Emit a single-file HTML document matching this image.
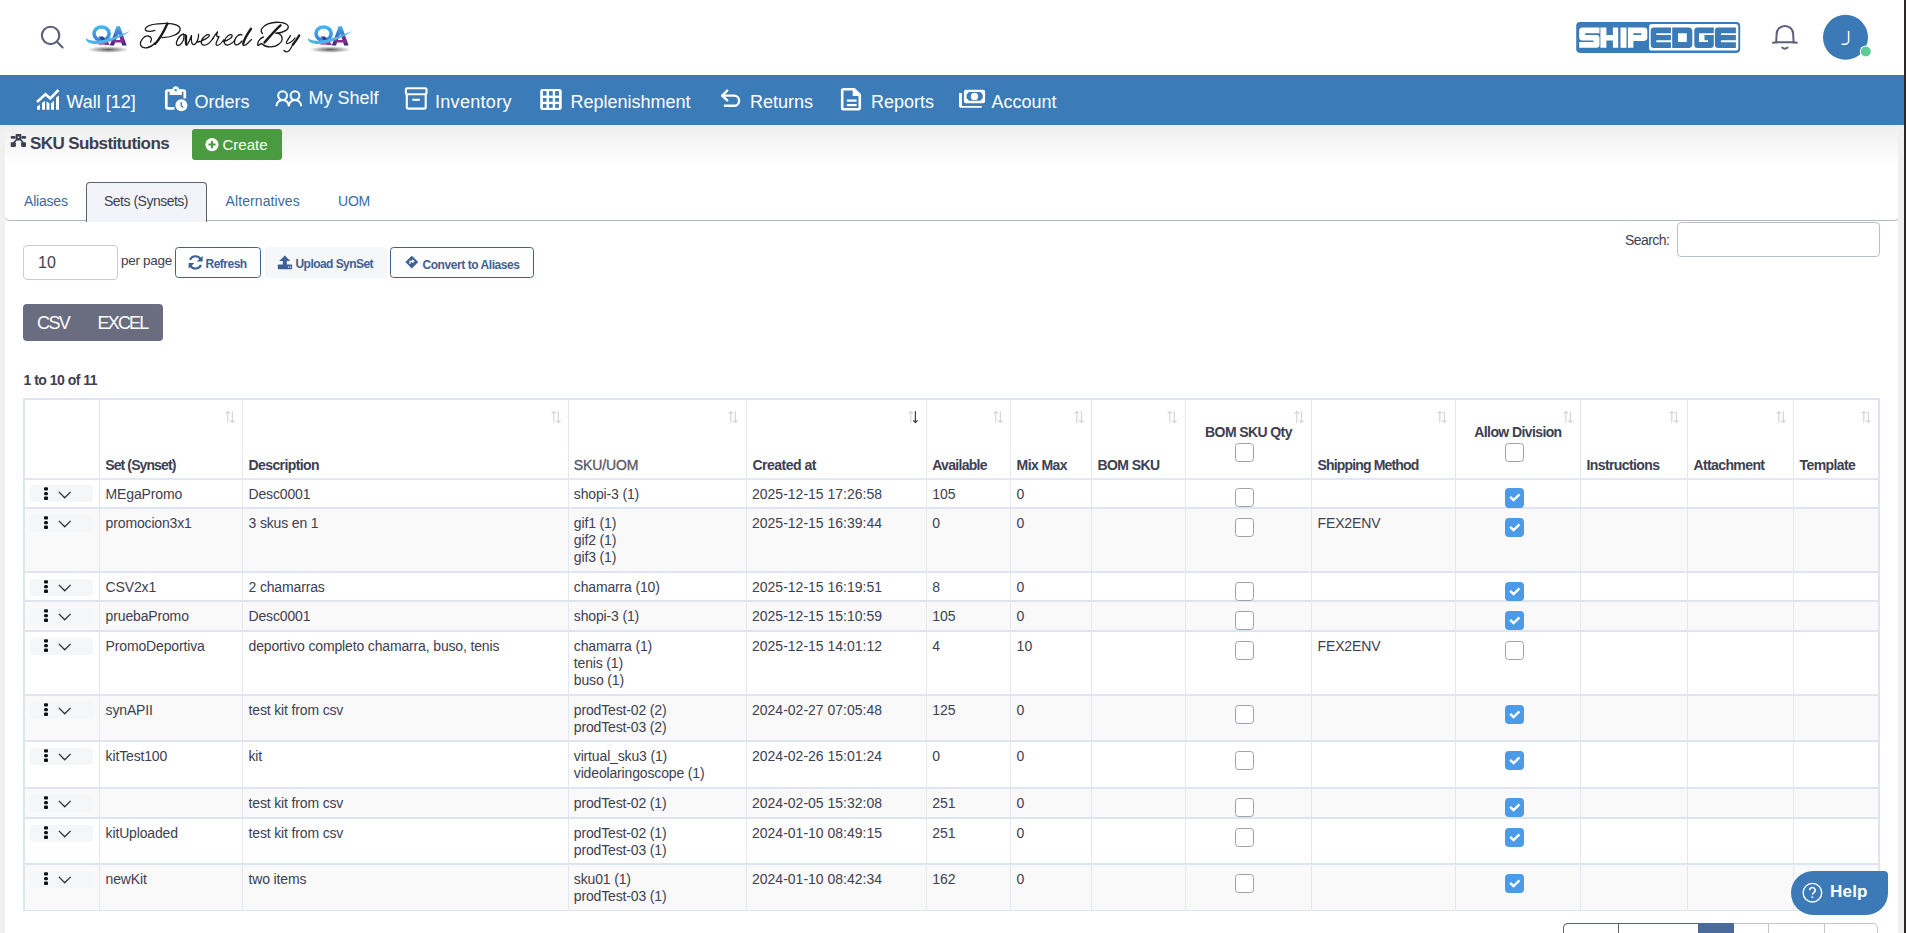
<!DOCTYPE html>
<html><head><meta charset="utf-8">
<style>
*{box-sizing:border-box;}
html,body{margin:0;padding:0;}
body{width:1906px;height:933px;overflow:hidden;position:relative;background:#f0f0f0;font-family:"Liberation Sans",sans-serif;color:#3d4051;}
.a{position:absolute;white-space:nowrap;}
#hdr{position:absolute;left:0;top:0;width:1904px;height:75px;background:#fff;}
#nav{position:absolute;left:0;top:75px;width:1904px;height:50px;background:#3b7bb7;}
#edge{position:absolute;left:1904px;top:0;width:2px;height:933px;background:#2b2826;}
.nt{position:absolute;color:#fff;font-size:18px;line-height:20px;white-space:nowrap;}
#card{position:absolute;left:5px;top:125px;width:1893px;height:96px;border-radius:6px 6px 4px 5px;background:linear-gradient(#eeeeef,#fff 42%);border-bottom:1.5px solid #aeb5c3;}
#body{position:absolute;left:5px;top:221px;width:1893px;height:712px;background:#fff;}
.t{position:absolute;white-space:nowrap;line-height:17px;}
.tab{position:absolute;font-size:14px;line-height:17px;color:#3b6aa5;letter-spacing:-0.2px;white-space:nowrap;}
.btn{position:absolute;border:1.3px solid #3e6094;border-radius:3.5px;background:#fff;}
.bt{position:absolute;white-space:nowrap;color:#3e6094;font-weight:bold;font-size:12px;line-height:14px;}
.hl{position:absolute;background:#e3e8f0;}
.th{position:absolute;white-space:nowrap;font-weight:bold;font-size:14px;line-height:17px;letter-spacing:-0.6px;color:#3d4051;}
.td{position:absolute;white-space:nowrap;font-size:14px;line-height:17px;letter-spacing:-0.15px;color:#3d4051;}
.cb{position:absolute;width:18.9px;height:19.2px;border:1px solid #9da1ac;border-radius:3.5px;background:#fff;}
.cbc{position:absolute;width:18.9px;height:19.4px;border-radius:4px;background:#4b9be8;}
.act{position:absolute;left:30px;width:63px;height:17px;border-radius:4px;background:#f5f6f8;}
</style></head><body>
<div id="hdr"></div>
<div id="nav"></div>
<div id="edge"></div>
<!-- header -->
<svg class="a" style="left:0;top:0" width="420" height="75">
  <g fill="none" stroke="#5d6076" stroke-width="2.1" stroke-linecap="round">
    <circle cx="50.6" cy="35.4" r="8.7"/>
    <line x1="57.2" y1="42" x2="62.6" y2="47.4"/>
  </g>
  <!-- QA logo 1 -->
  <defs>
    <linearGradient id="qg" x1="0" y1="0" x2="0" y2="1"><stop offset="0" stop-color="#4ab2ec"/><stop offset="1" stop-color="#3a86d6"/></linearGradient>
    <linearGradient id="ag" x1="0" y1="0" x2="0" y2="1"><stop offset="0" stop-color="#4aaee8"/><stop offset="0.45" stop-color="#3a78cc"/><stop offset="0.6" stop-color="#7a2c90"/><stop offset="1" stop-color="#3a2a80"/></linearGradient>
    <radialGradient id="sh"><stop offset="0" stop-color="#222" stop-opacity=".75"/><stop offset="1" stop-color="#333" stop-opacity="0"/></radialGradient>
  </defs>
  <g id="qa1">
    <ellipse cx="108.2" cy="49.6" rx="21" ry="3.4" fill="url(#sh)"/>
    <ellipse cx="101.6" cy="33.6" rx="7.6" ry="6.6" fill="none" stroke="url(#qg)" stroke-width="3.6"/>
    <path d="M98.5 36.5 H103 L110 45 H105.5 Z" fill="#2e3f98"/>
    <path d="M98 41 H108 L109 44.7 H98.5 Z" fill="#c42c8c" opacity="0.85"/>
    <path d="M116.6 26.2 H120 L126.6 45.6 H122.2 L118.3 33.5 L114 45.6 H109.8 Z" fill="url(#ag)"/>
    <rect x="113.2" y="40" width="10.4" height="2.5" fill="#8a2c8c"/>
    <path d="M86.2 38.3 C84.8 42.5 92 44.8 100 43.8 C112 42.3 122 36 130.4 31 C120 34.8 108 39.8 99 40.6 C92 41.2 88 40.3 86.2 38.3 Z" fill="#4db4ea"/>
  </g>
  <g transform="translate(222,0)">
    <ellipse cx="108.2" cy="49.6" rx="21" ry="3.4" fill="url(#sh)"/>
    <ellipse cx="101.6" cy="33.6" rx="7.6" ry="6.6" fill="none" stroke="url(#qg)" stroke-width="3.6"/>
    <path d="M98.5 36.5 H103 L110 45 H105.5 Z" fill="#2e3f98"/>
    <path d="M98 41 H108 L109 44.7 H98.5 Z" fill="#c42c8c" opacity="0.85"/>
    <path d="M116.6 26.2 H120 L126.6 45.6 H122.2 L118.3 33.5 L114 45.6 H109.8 Z" fill="url(#ag)"/>
    <rect x="113.2" y="40" width="10.4" height="2.5" fill="#8a2c8c"/>
    <path d="M86.2 38.3 C84.8 42.5 92 44.8 100 43.8 C112 42.3 122 36 130.4 31 C120 34.8 108 39.8 99 40.6 C92 41.2 88 40.3 86.2 38.3 Z" fill="#4db4ea"/>
  </g>
  <g fill="none" stroke="#1c1c1c" stroke-linecap="round" stroke-linejoin="round">
    <g stroke-width="1.3">
      <path d="M154.8 30.4 C150 32 144 31.5 145.5 28.5 C147 25.5 155 23.5 166 23.3 C175 23.2 181 26 180 30 C179 34 172 37.5 162 37.7"/>
      <path d="M155 43 C151 48 143 50 140.5 45 C139.5 41 144 35.5 148 36 C152 36.5 152 40 150.5 42"/>
      <path d="M183.5 34 C179 35 175 43 177 45 C179.5 47 184.5 41 184 36.5 C183.8 34.5 183 34 185.5 35"/>
      <path d="M185.5 35 C186 40 185 44 186.5 45 C188 45.5 190 39 191.5 35.5 C191 40 191.5 45 194 44.7 C197 44 199 37 198.5 34.5"/>
      <path d="M197.5 42 C203 41 210 37 209.3 35 C208.5 33.5 203 36 201.5 41 C200.5 45 204 46 207 44.5 C210 43 212 40 213 38.5"/>
      <path d="M212.5 39 C215 35.5 217 32 217.5 31.8 C216.5 35 216 37.5 219 36.5 C217.5 40 214.5 45 217 45.3 C220 45.3 223 41 224 39.5"/>
      <path d="M223.5 41.5 C228 40.5 233 37.5 232 35.2 C231 33.5 226 36 224.5 40.5 C223.5 44 226 46 229.5 44.5 C232 43.5 234 41.5 235 40"/>
      <path d="M242 35 C239 33 234 38 234.5 43 C235 46 238.5 45.5 242 41"/>
      <path d="M243 44 C242.5 46 245 46 247.5 43.5 C249.5 41.5 251 40 251.5 39.5"/>
      <path d="M262.5 33.5 C259.5 31 262 26 268 23.8 C274 21.5 285 21.5 287.8 25.5 C290 29 284 33 275.5 33.2 C283 33.5 284 40 279 44 C275 47.5 266 48 263 44.5 C260.5 42 259 46 258 45.5 C257 44 259 38 263.5 37"/>
      <path d="M290.5 35.5 C289 38.5 285.5 42 286.5 43.3 C288 44.5 293 41 295 38"/>
      <path d="M293 44 C291 48 290 50.5 288 51.5 C286.5 52.3 285 51.5 284 50.5"/>
    </g>
    <g stroke-width="2.4">
      <path d="M167.5 23.5 C164 31 159 40 155 44"/>
      <path d="M251 28.8 C248 33 244.5 39 243.2 43.5"/>
      <path d="M280.5 25.3 C275 30 268.5 38 264.5 42.5"/>
      <path d="M299.2 35.5 C297.5 38.5 295 42 293 44.5"/>
      <path d="M186 36 C186 40 185.5 43 186.5 44.5"/>
    </g>
  </g>
</svg>

<svg class="a" style="left:1570px;top:15px" width="180" height="45"><g transform="translate(-1570,-15)">
  <rect x="1576.2" y="21.9" width="164" height="31" rx="3.8" fill="#3b7bb7"/>
  <rect x="1649.1" y="24.1" width="89.2" height="26.4" rx="2.6" fill="#fff"/>
  <g fill="#fff">
    <path d="M1582.5 27.5 H1599.5 V33.2 H1585.2 V34.9 H1596.5 A3 3 0 0 1 1599.5 37.9 V44.8 A3 3 0 0 1 1596.5 47.8 H1579.2 V42 H1593.5 V40.6 H1582.2 A3 3 0 0 1 1579.2 37.6 V30.8 A3.3 3.3 0 0 1 1582.5 27.5 Z"/>
    <path d="M1600.4 27.5 H1606.4 V34.9 H1612.9 V27.5 H1618.2 V47.8 H1612.9 V40.6 H1606.4 V47.8 H1600.4 Z"/>
    <rect x="1620.5" y="27.5" width="6" height="20.3"/>
    <path d="M1627.9 27.5 H1644 A3.3 3.3 0 0 1 1647.3 30.8 V37.6 A3.3 3.3 0 0 1 1644 40.9 H1633.4 V47.8 H1627.9 Z M1633.4 33.2 V34.9 H1641.3 V33.2 Z" fill-rule="evenodd"/>
  </g>
  <g fill="#3b7bb7" fill-rule="evenodd">
    <path d="M1654 27.4 H1670.9 V33.2 H1656.3 V35.1 H1670.9 V40.3 H1656.3 V42.2 H1670.9 V48 H1654 A3.3 3.3 0 0 1 1650.7 44.7 V30.7 A3.3 3.3 0 0 1 1654 27.4 Z"/>
    <path d="M1672.2 27.4 H1688.5 A3.8 3.8 0 0 1 1692.3 31.2 V44.2 A3.8 3.8 0 0 1 1688.5 48 H1672.2 Z M1678 33.2 V42 H1686.8 V33.2 Z"/>
    <path d="M1697.6 27.4 H1713.8 V33.2 H1699 V42 H1708 V40.3 H1704.5 V35.1 H1713.8 V44.7 A3.3 3.3 0 0 1 1710.5 48 H1697.6 A3.3 3.3 0 0 1 1694.3 44.7 V30.7 A3.3 3.3 0 0 1 1697.6 27.4 Z"/>
    <path d="M1718.2 27.4 H1735.9 V33.2 H1721 V35.1 H1735.9 V40.3 H1721 V42.2 H1735.9 V48 H1718.2 A3.3 3.3 0 0 1 1714.9 44.7 V30.7 A3.3 3.3 0 0 1 1718.2 27.4 Z"/>
  </g>
</g></svg>

<svg class="a" style="left:1760px;top:10px" width="146" height="60">
  <g fill="none" stroke="#5d6076" stroke-width="2" stroke-linecap="round" stroke-linejoin="round">
    <path d="M16.2 32.6 L16.6 24.2 A8.3 8.3 0 0 1 33.2 24.2 L33.6 32.6"/>
    <path d="M13 32.8 Q14.5 32.4 16.2 32.2 H33.6 Q35.3 32.4 36.8 32.8"/>
    <path d="M22.2 37.6 Q24.9 40 27.6 37.6"/>
  </g>
  <circle cx="85.5" cy="27.3" r="22.5" fill="#3b7ab6"/>
  <path d="M88.6 21 V30.8 A3.4 3.4 0 0 1 85.2 34.2 H81.6" fill="none" stroke="#fff" stroke-width="1.5"/>
  <circle cx="105.8" cy="41.5" r="6" fill="#fff"/>
  <circle cx="105.8" cy="41.5" r="5" fill="#5ecc92"/>
</svg>

<!-- nav -->
<svg class="a" style="left:0;top:75px" width="1100" height="50">
  <g fill="#fff">
    <!-- wall: origin 32,9 -->
    <g transform="translate(32,9)">
      <path d="M5 18 L13.5 10.3 L18.3 14.5 L26.5 6" fill="none" stroke="#fff" stroke-width="2.6"/>
      <path d="M5 25.7 V22.6 L8 20.6 V25.7 Z"/>
      <path d="M10 25.7 V18.8 L13 17 V25.7 Z"/>
      <path d="M14.5 25.7 V17.3 L17.5 19.6 V25.7 Z"/>
      <path d="M19 25.7 V19.2 L22 16.7 V25.7 Z"/>
      <path d="M24 25.7 V13.6 L27 11.6 V25.7 Z"/>
    </g>
    <!-- orders: origin 160,9 -->
    <g transform="translate(160,9)">
      <path d="M14.5 24.3 H7.6 A1.3 1.3 0 0 1 6.3 23 V7.8 A1.3 1.3 0 0 1 7.6 6.5 H23.5 A1.3 1.3 0 0 1 24.8 7.8 V14.5" fill="none" stroke="#fff" stroke-width="2.7"/>
      <path d="M9.6 5 H12.5 A3.3 3.3 0 0 1 19 5 H21.9 V11 H9.6 Z"/>
      <circle cx="15.75" cy="6.1" r="1.2" fill="#3b7bb7"/>
      <circle cx="21.4" cy="21.2" r="6"/>
      <path d="M21.2 18 V21.6 L23.3 23.4" fill="none" stroke="#3b7bb7" stroke-width="1.3"/>
    </g>
    <!-- my shelf: origin 272,9 -->
    <g transform="translate(272,9)" fill="none" stroke="#fff" stroke-width="2">
      <circle cx="10.6" cy="11.6" r="4.4"/>
      <circle cx="23" cy="11.6" r="4.4"/>
      <path d="M4.4 22.2 A6.2 6.2 0 0 1 16.8 22.2"/>
      <path d="M16.8 22.2 A6.2 6.2 0 0 1 29.2 22.2"/>
    </g>
    <!-- inventory: origin 400,9 -->
    <g transform="translate(400,9)" fill="none" stroke="#fff" stroke-width="2.1">
      <rect x="5.9" y="4.2" width="20.6" height="6" rx="1.2"/>
      <path d="M6.8 10.6 V23.6 A1 1 0 0 0 7.8 24.6 H24.7 A1 1 0 0 0 25.7 23.6 V10.6"/>
      <line x1="12.4" y1="15.8" x2="19.8" y2="15.8"/>
    </g>
    <!-- replenishment: origin 536,9 -->
    <g transform="translate(536,9)">
      <rect x="4.2" y="5" width="21.5" height="20.9" rx="2.2"/>
      <g fill="#3b7bb7">
        <rect x="6.9" y="7.1" width="3.6" height="4.5"/><rect x="13" y="7.1" width="3.7" height="4.5"/><rect x="19.1" y="7.1" width="3.9" height="4.5"/>
        <rect x="6.9" y="14" width="3.6" height="3.7"/><rect x="13" y="14" width="3.7" height="3.7"/><rect x="19.1" y="14" width="3.9" height="3.7"/>
        <rect x="6.9" y="20.1" width="3.6" height="3.7"/><rect x="13" y="20.1" width="3.7" height="3.7"/><rect x="19.1" y="20.1" width="3.9" height="3.7"/>
      </g>
    </g>
    <!-- returns: origin 716,9 -->
    <g transform="translate(716,9)" fill="none" stroke="#fff" stroke-width="2.4" stroke-linecap="round" stroke-linejoin="round">
      <path d="M11.2 6.6 L6.2 11.6 L11.2 16.4"/>
      <path d="M6.4 11.6 H18 A5.1 5.1 0 0 1 18 21.8 H8.9"/>
    </g>
    <!-- reports: origin 836,9 -->
    <g transform="translate(836,9)">
      <path d="M7.5 5.3 H18.2 L23.8 10.9 V24 A1.3 1.3 0 0 1 22.5 25.3 H7.5 A1.3 1.3 0 0 1 6.2 24 V6.6 A1.3 1.3 0 0 1 7.5 5.3 Z" fill="none" stroke="#fff" stroke-width="2.6" stroke-linejoin="round"/>
      <path d="M16.7 4.5 H19 L25 10.5 V11.9 H16.7 Z"/>
      <rect x="10.9" y="15.5" width="9.7" height="2.2"/>
      <rect x="10.9" y="20" width="9.7" height="2.2"/>
    </g>
    <!-- account: origin 956,9 -->
    <g transform="translate(956,9)">
      <path fill-rule="evenodd" d="M9.9 5.8 H27.1 A2 2 0 0 1 29.1 7.8 V17.3 A2 2 0 0 1 27.1 19.3 H9.9 A2 2 0 0 1 7.9 17.3 V7.8 A2 2 0 0 1 9.9 5.8 Z M13 8 H24.3 L26.7 10.4 V14.3 L24.3 16.7 H13 L10.6 14.3 V10.4 Z"/>
      <circle cx="18.5" cy="12.4" r="3.7"/>
      <path d="M3.05 9 H5.95 V21.9 H25.7 V23.8 H4.5 A1.45 1.45 0 0 1 3.05 22.35 Z"/>
    </g>
  </g>
</svg>
<div class="nt" style="left:66.5px;top:92px">Wall [12]</div>
<div class="nt" style="left:194.5px;top:92px">Orders</div>
<div class="nt" style="left:308.5px;top:88px">My Shelf</div>
<div class="nt" style="left:435px;top:92px;letter-spacing:0.3px">Inventory</div>
<div class="nt" style="left:570.5px;top:92px">Replenishment</div>
<div class="nt" style="left:750px;top:92px">Returns</div>
<div class="nt" style="left:871px;top:92px">Reports</div>
<div class="nt" style="left:991.5px;top:92px">Account</div>


<div id="body"></div>
<div id="card"></div>
<svg class="a" style="left:8px;top:130px" width="24" height="22"><g fill="#3d4051">
<path d="M7.7 4.1 H13.3 V10.4 H7.7 Z M9.8 6.5 V8 H11.2 V6.5 Z" fill-rule="evenodd"/>
<rect x="2.7" y="6" width="5" height="2.7" rx="1.3"/><rect x="13.3" y="6" width="4.9" height="2.7" rx="1.3"/>
<rect x="2.7" y="12.3" width="5.2" height="4.6" rx="0.8"/><rect x="13.1" y="12.3" width="4.9" height="4.6" rx="0.8"/>
<path d="M8.3 10 L5.6 12.8 M12.7 10 L15.4 12.8" stroke="#3d4051" stroke-width="1.6"/>
</g></svg>
<div class="t" style="left:30px;top:134px;font-size:17px;line-height:20px;font-weight:bold;letter-spacing:-0.6px;color:#3d4051">SKU Substitutions</div>
<div class="a" style="left:192px;top:129px;width:90px;height:31px;border-radius:3px;background:#4a9b40"></div>
<svg class="a" style="left:200px;top:132px" width="26" height="26"><circle cx="12" cy="12.6" r="6.6" fill="#fff"/><path d="M12 9 V16.2 M8.4 12.6 H15.6" stroke="#4a9b40" stroke-width="2"/></svg>
<div class="t" style="left:222.5px;top:136px;font-size:15px;line-height:17px;color:#fff">Create</div>
<div class="a" style="left:86px;top:182px;width:121px;height:39.5px;border:1px solid #5a6278;border-bottom:none;border-radius:4px 4px 0 0;background:#f3f4f9"></div>
<div class="tab" style="left:24px;top:193px">Aliases</div>
<div class="tab" style="left:104px;top:193px;color:#3d4051;letter-spacing:-0.5px">Sets (Synsets)</div>
<div class="tab" style="left:225.5px;top:193px;letter-spacing:0.1px">Alternatives</div>
<div class="tab" style="left:338px;top:193px">UOM</div>
<div class="a" style="left:23px;top:245px;width:95px;height:35px;border:1px solid #c9cdd5;border-radius:4px;background:#fff"></div>
<div class="t" style="left:38px;top:254px;font-size:16px;line-height:18px;color:#3d4051">10</div>
<div class="t" style="left:121px;top:253px;font-size:13.5px;line-height:16px;color:#3d4051;letter-spacing:-0.3px">per page</div>
<div class="btn" style="left:175px;top:247px;width:86px;height:31px"></div>
<svg class="a" style="left:186px;top:253px" width="20" height="20"><g fill="none" stroke="#3e6094" stroke-width="2.2">
<path d="M14.8 6.5 A6 6 0 0 0 4 6.8"/><path d="M4.2 12.2 A6 6 0 0 0 15 12"/></g>
<g fill="#3e6094"><path d="M16.6 2.7 V8.4 H10.9 Z"/><path d="M2.6 15.8 V10.1 H8.3 Z"/></g></svg>
<div class="bt" style="left:205.5px;top:257px;letter-spacing:-0.5px">Refresh</div>
<div class="a" style="left:264.5px;top:247px;width:122px;height:31px;border-radius:4px;background:#f6f7f9"></div>
<svg class="a" style="left:276px;top:253px" width="20" height="20"><g fill="#3e6094">
<path d="M8.8 2.5 L14.3 8 H10.8 V13 H6.8 V8 H3.3 Z"/><rect x="1.8" y="11.5" width="14.3" height="4.7" rx="0.8"/></g>
<g fill="#f6f7f9"><rect x="12" y="13.5" width="1.2" height="1.2"/><rect x="14" y="13.5" width="1.2" height="1.2"/></g></svg>
<div class="bt" style="left:295.5px;top:257px;letter-spacing:-0.55px">Upload SynSet</div>
<div class="btn" style="left:390px;top:247px;width:144px;height:31px"></div>
<svg class="a" style="left:403px;top:254px" width="18" height="18"><path d="M8.8 1.7 L15.2 8.1 L8.8 14.5 L2.4 8.1 Z" fill="#3e6094"/>
<path d="M7 10 V7.3 H10.5 M9.2 5.8 L10.8 7.3 L9.2 8.8" fill="none" stroke="#fff" stroke-width="1.2"/></svg>
<div class="bt" style="left:422.5px;top:257.5px;letter-spacing:-0.44px">Convert to Aliases</div>
<div class="t" style="left:1625px;top:232px;font-size:14px;line-height:17px;color:#3d4051;letter-spacing:-0.55px">Search:</div>
<div class="a" style="left:1677px;top:221.5px;width:203px;height:35px;border:1px solid #b9c0cc;border-radius:4px;background:#fff"></div>
<div class="a" style="left:23px;top:304px;width:140px;height:37px;border-radius:4px;background:#6a6d80"></div>
<div class="t" style="left:37px;top:313px;font-size:18px;line-height:20px;color:#fff;letter-spacing:-1.6px">CSV</div>
<div class="t" style="left:97.5px;top:313px;font-size:18px;line-height:20px;color:#fff;letter-spacing:-1.8px">EXCEL</div>
<div class="t" style="left:23.5px;top:372px;font-size:14px;line-height:17px;font-weight:bold;color:#3d4051;letter-spacing:-0.5px">1 to 10 of 11</div>
<div class="a" style="left:24px;top:478.5px;width:1856px;height:29.5px;background:#fff"></div>
<div class="a" style="left:24px;top:508px;width:1856px;height:64px;background:#f9f9fa"></div>
<div class="a" style="left:24px;top:572px;width:1856px;height:29px;background:#fff"></div>
<div class="a" style="left:24px;top:601px;width:1856px;height:30px;background:#f9f9fa"></div>
<div class="a" style="left:24px;top:631px;width:1856px;height:64px;background:#fff"></div>
<div class="a" style="left:24px;top:695px;width:1856px;height:46px;background:#f9f9fa"></div>
<div class="a" style="left:24px;top:741px;width:1856px;height:47px;background:#fff"></div>
<div class="a" style="left:24px;top:788px;width:1856px;height:30px;background:#f9f9fa"></div>
<div class="a" style="left:24px;top:818px;width:1856px;height:46px;background:#fff"></div>
<div class="a" style="left:24px;top:864px;width:1856px;height:46.39999999999998px;background:#f9f9fa"></div>
<div class="hl" style="left:23px;top:399px;width:2px;height:512.4px;background:#dfe5ee"></div>
<div class="hl" style="left:98.8px;top:399px;width:1px;height:511.4px"></div>
<div class="hl" style="left:242.0px;top:399px;width:1px;height:511.4px"></div>
<div class="hl" style="left:568.0px;top:399px;width:1px;height:511.4px"></div>
<div class="hl" style="left:745.9px;top:399px;width:1px;height:511.4px"></div>
<div class="hl" style="left:925.7px;top:399px;width:1px;height:511.4px"></div>
<div class="hl" style="left:1010.1px;top:399px;width:1px;height:511.4px"></div>
<div class="hl" style="left:1091.0px;top:399px;width:1px;height:511.4px"></div>
<div class="hl" style="left:1184.9px;top:399px;width:1px;height:511.4px"></div>
<div class="hl" style="left:1311.1px;top:399px;width:1px;height:511.4px"></div>
<div class="hl" style="left:1454.9px;top:399px;width:1px;height:511.4px"></div>
<div class="hl" style="left:1580.0px;top:399px;width:1px;height:511.4px"></div>
<div class="hl" style="left:1686.9px;top:399px;width:1px;height:511.4px"></div>
<div class="hl" style="left:1793.1px;top:399px;width:1px;height:511.4px"></div>
<div class="hl" style="left:1878.3px;top:399px;width:2px;height:512.4px;background:#dfe5ee"></div>
<div class="hl" style="left:23px;top:398px;width:1857px;height:2px;background:#dfe5ee"></div>
<div class="hl" style="left:23px;top:478.0px;width:1857px;height:1.5px"></div>
<div class="hl" style="left:23px;top:507px;width:1857px;height:2px;background:#dfe5ee"></div>
<div class="hl" style="left:23px;top:571px;width:1857px;height:2px;background:#dfe5ee"></div>
<div class="hl" style="left:23px;top:600px;width:1857px;height:2px;background:#dfe5ee"></div>
<div class="hl" style="left:23px;top:630px;width:1857px;height:2px;background:#dfe5ee"></div>
<div class="hl" style="left:23px;top:694px;width:1857px;height:2px;background:#dfe5ee"></div>
<div class="hl" style="left:23px;top:740px;width:1857px;height:2px;background:#dfe5ee"></div>
<div class="hl" style="left:23px;top:787px;width:1857px;height:2px;background:#dfe5ee"></div>
<div class="hl" style="left:23px;top:817px;width:1857px;height:2px;background:#dfe5ee"></div>
<div class="hl" style="left:23px;top:863px;width:1857px;height:2px;background:#dfe5ee"></div>
<div class="hl" style="left:23px;top:909.9px;width:1857px;height:1.2px;background:#dfe5ee"></div>
<svg class="a" style="left:222.5px;top:409px" width="14" height="16"><g fill="none" stroke-width="1.2" stroke-linecap="round" stroke-linejoin="round"><path d="M4.800000000000011 2.5 V13.5 M2.9000000000000115 4.4 L4.800000000000011 2.5 L6.700000000000012 4.4" stroke="#d5d6db"/><path d="M9.400000000000006 2.5 V13.5 M7.500000000000005 11.6 L9.400000000000006 13.5 L11.300000000000006 11.6" stroke="#d5d6db"/></g></svg>
<svg class="a" style="left:548.5px;top:409px" width="14" height="16"><g fill="none" stroke-width="1.2" stroke-linecap="round" stroke-linejoin="round"><path d="M4.7999999999999545 2.5 V13.5 M2.8999999999999546 4.4 L4.7999999999999545 2.5 L6.699999999999955 4.4" stroke="#d5d6db"/><path d="M9.399999999999977 2.5 V13.5 M7.499999999999977 11.6 L9.399999999999977 13.5 L11.299999999999978 11.6" stroke="#d5d6db"/></g></svg>
<svg class="a" style="left:726.4px;top:409px" width="14" height="16"><g fill="none" stroke-width="1.2" stroke-linecap="round" stroke-linejoin="round"><path d="M4.7999999999999545 2.5 V13.5 M2.8999999999999546 4.4 L4.7999999999999545 2.5 L6.699999999999955 4.4" stroke="#d5d6db"/><path d="M9.399999999999977 2.5 V13.5 M7.499999999999977 11.6 L9.399999999999977 13.5 L11.299999999999978 11.6" stroke="#d5d6db"/></g></svg>
<svg class="a" style="left:906.2px;top:409px" width="14" height="16"><g fill="none" stroke-width="1.2" stroke-linecap="round" stroke-linejoin="round"><path d="M4.7999999999999545 2.5 V13.5 M2.8999999999999546 4.4 L4.7999999999999545 2.5 L6.699999999999955 4.4" stroke="#d5d6db"/><path d="M9.399999999999977 2.5 V13.5 M7.499999999999977 11.6 L9.399999999999977 13.5 L11.299999999999978 11.6" stroke="#3d4051"/></g></svg>
<svg class="a" style="left:990.6px;top:409px" width="14" height="16"><g fill="none" stroke-width="1.2" stroke-linecap="round" stroke-linejoin="round"><path d="M4.7999999999999545 2.5 V13.5 M2.8999999999999546 4.4 L4.7999999999999545 2.5 L6.699999999999955 4.4" stroke="#d5d6db"/><path d="M9.399999999999977 2.5 V13.5 M7.499999999999977 11.6 L9.399999999999977 13.5 L11.299999999999978 11.6" stroke="#d5d6db"/></g></svg>
<svg class="a" style="left:1071.5px;top:409px" width="14" height="16"><g fill="none" stroke-width="1.2" stroke-linecap="round" stroke-linejoin="round"><path d="M4.7999999999999545 2.5 V13.5 M2.8999999999999546 4.4 L4.7999999999999545 2.5 L6.699999999999955 4.4" stroke="#d5d6db"/><path d="M9.400000000000091 2.5 V13.5 M7.500000000000091 11.6 L9.400000000000091 13.5 L11.300000000000091 11.6" stroke="#d5d6db"/></g></svg>
<svg class="a" style="left:1165.4px;top:409px" width="14" height="16"><g fill="none" stroke-width="1.2" stroke-linecap="round" stroke-linejoin="round"><path d="M4.7999999999999545 2.5 V13.5 M2.8999999999999546 4.4 L4.7999999999999545 2.5 L6.699999999999955 4.4" stroke="#d5d6db"/><path d="M9.400000000000091 2.5 V13.5 M7.500000000000091 11.6 L9.400000000000091 13.5 L11.300000000000091 11.6" stroke="#d5d6db"/></g></svg>
<svg class="a" style="left:1291.6px;top:409px" width="14" height="16"><g fill="none" stroke-width="1.2" stroke-linecap="round" stroke-linejoin="round"><path d="M4.7999999999999545 2.5 V13.5 M2.8999999999999546 4.4 L4.7999999999999545 2.5 L6.699999999999955 4.4" stroke="#d5d6db"/><path d="M9.400000000000091 2.5 V13.5 M7.500000000000091 11.6 L9.400000000000091 13.5 L11.300000000000091 11.6" stroke="#d5d6db"/></g></svg>
<svg class="a" style="left:1435.4px;top:409px" width="14" height="16"><g fill="none" stroke-width="1.2" stroke-linecap="round" stroke-linejoin="round"><path d="M4.7999999999999545 2.5 V13.5 M2.8999999999999546 4.4 L4.7999999999999545 2.5 L6.699999999999955 4.4" stroke="#d5d6db"/><path d="M9.400000000000091 2.5 V13.5 M7.500000000000091 11.6 L9.400000000000091 13.5 L11.300000000000091 11.6" stroke="#d5d6db"/></g></svg>
<svg class="a" style="left:1560.5px;top:409px" width="14" height="16"><g fill="none" stroke-width="1.2" stroke-linecap="round" stroke-linejoin="round"><path d="M4.7999999999999545 2.5 V13.5 M2.8999999999999546 4.4 L4.7999999999999545 2.5 L6.699999999999955 4.4" stroke="#d5d6db"/><path d="M9.400000000000091 2.5 V13.5 M7.500000000000091 11.6 L9.400000000000091 13.5 L11.300000000000091 11.6" stroke="#d5d6db"/></g></svg>
<svg class="a" style="left:1667.4px;top:409px" width="14" height="16"><g fill="none" stroke-width="1.2" stroke-linecap="round" stroke-linejoin="round"><path d="M4.7999999999999545 2.5 V13.5 M2.8999999999999546 4.4 L4.7999999999999545 2.5 L6.699999999999955 4.4" stroke="#d5d6db"/><path d="M9.400000000000091 2.5 V13.5 M7.500000000000091 11.6 L9.400000000000091 13.5 L11.300000000000091 11.6" stroke="#d5d6db"/></g></svg>
<svg class="a" style="left:1773.6px;top:409px" width="14" height="16"><g fill="none" stroke-width="1.2" stroke-linecap="round" stroke-linejoin="round"><path d="M4.7999999999999545 2.5 V13.5 M2.8999999999999546 4.4 L4.7999999999999545 2.5 L6.699999999999955 4.4" stroke="#d5d6db"/><path d="M9.400000000000091 2.5 V13.5 M7.500000000000091 11.6 L9.400000000000091 13.5 L11.300000000000091 11.6" stroke="#d5d6db"/></g></svg>
<svg class="a" style="left:1859.3px;top:409px" width="14" height="16"><g fill="none" stroke-width="1.2" stroke-linecap="round" stroke-linejoin="round"><path d="M4.7999999999999545 2.5 V13.5 M2.8999999999999546 4.4 L4.7999999999999545 2.5 L6.699999999999955 4.4" stroke="#d5d6db"/><path d="M9.400000000000091 2.5 V13.5 M7.500000000000091 11.6 L9.400000000000091 13.5 L11.300000000000091 11.6" stroke="#d5d6db"/></g></svg>
<div class="th" style="left:105.3px;top:457.3px;letter-spacing:-0.9px">Set (Synset)</div>
<div class="th" style="left:248.5px;top:457.3px;letter-spacing:-0.6px">Description</div>
<div class="th" style="left:752.4px;top:457.3px;letter-spacing:-0.5px">Created at</div>
<div class="th" style="left:932.2px;top:457.3px;letter-spacing:-0.7px">Available</div>
<div class="th" style="left:1016.6px;top:457.3px;letter-spacing:-0.6px">Mix Max</div>
<div class="th" style="left:1097.5px;top:457.3px;letter-spacing:-0.6px">BOM SKU</div>
<div class="th" style="left:1317.6px;top:457.3px;letter-spacing:-0.85px">Shipping Method</div>
<div class="th" style="left:1586.5px;top:457.3px;letter-spacing:-0.6px">Instructions</div>
<div class="th" style="left:1693.4px;top:457.3px;letter-spacing:-0.6px">Attachment</div>
<div class="th" style="left:1799.6px;top:457.3px;letter-spacing:-0.6px">Template</div>
<div class="th" style="left:573.8px;top:457.3px;font-weight:normal;letter-spacing:-0.1px;color:#575a6c;-webkit-text-stroke:0.35px #575a6c">SKU/UOM</div>
<div class="th" style="left:1185.4px;width:126.19999999999982px;text-align:center;top:423.5px">BOM SKU Qty</div>
<div class="th" style="left:1455.4px;width:125.09999999999991px;text-align:center;top:423.5px">Allow Division</div>
<div class="cb" style="left:1235.3999999999999px;top:443px"></div>
<div class="cb" style="left:1505.3px;top:443px"></div>
<div class="act" style="top:485.0px"></div>
<svg class="a" style="left:40px;top:484.5px" width="36" height="18"><g fill="#111"><rect x="4" y="2.2" width="4" height="3.3" rx="1"/><rect x="4" y="6.9" width="4" height="3.3" rx="1.5"/><rect x="4" y="11.6" width="4" height="3.3" rx="1"/></g><path d="M18.9 6.9 L24.7 12.8 L30.6 6.9" fill="none" stroke="#2d2f3a" stroke-width="1.3"/></svg>
<div class="td" style="left:105.6px;top:485.9px">MEgaPromo</div>
<div class="td" style="left:248.5px;top:485.9px">Desc0001</div>
<div class="td" style="left:573.8px;top:485.9px">shopi-3 (1)</div>
<div class="td" style="left:752.0px;top:485.9px;letter-spacing:0">2025-12-15 17:26:58</div>
<div class="td" style="left:932.2px;top:485.9px;letter-spacing:0">105</div>
<div class="td" style="left:1016.6px;top:485.9px;letter-spacing:0">0</div>
<div class="cb" style="left:1235.3999999999999px;top:488.2px"></div>
<div class="cbc" style="left:1505.3px;top:488.2px"></div>
<svg class="a" style="left:1505.3px;top:488.2px" width="19" height="19"><path d="M6 9.6 L8.6 12.1 L13.6 7.2" fill="none" stroke="#fff" stroke-width="2.4" stroke-linecap="square" stroke-linejoin="miter"/></svg>
<div class="act" style="top:514.5px"></div>
<svg class="a" style="left:40px;top:514px" width="36" height="18"><g fill="#111"><rect x="4" y="2.2" width="4" height="3.3" rx="1"/><rect x="4" y="6.9" width="4" height="3.3" rx="1.5"/><rect x="4" y="11.6" width="4" height="3.3" rx="1"/></g><path d="M18.9 6.9 L24.7 12.8 L30.6 6.9" fill="none" stroke="#2d2f3a" stroke-width="1.3"/></svg>
<div class="td" style="left:105.6px;top:515.4px">promocion3x1</div>
<div class="td" style="left:248.5px;top:515.4px">3 skus en 1</div>
<div class="td" style="left:573.8px;top:515.4px">gif1 (1)<br>gif2 (1)<br>gif3 (1)</div>
<div class="td" style="left:752.0px;top:515.4px;letter-spacing:0">2025-12-15 16:39:44</div>
<div class="td" style="left:932.2px;top:515.4px;letter-spacing:0">0</div>
<div class="td" style="left:1016.6px;top:515.4px;letter-spacing:0">0</div>
<div class="td" style="left:1317.6px;top:515.4px">FEX2ENV</div>
<div class="cb" style="left:1235.3999999999999px;top:517.7px"></div>
<div class="cbc" style="left:1505.3px;top:517.7px"></div>
<svg class="a" style="left:1505.3px;top:517.7px" width="19" height="19"><path d="M6 9.6 L8.6 12.1 L13.6 7.2" fill="none" stroke="#fff" stroke-width="2.4" stroke-linecap="square" stroke-linejoin="miter"/></svg>
<div class="act" style="top:578.5px"></div>
<svg class="a" style="left:40px;top:578px" width="36" height="18"><g fill="#111"><rect x="4" y="2.2" width="4" height="3.3" rx="1"/><rect x="4" y="6.9" width="4" height="3.3" rx="1.5"/><rect x="4" y="11.6" width="4" height="3.3" rx="1"/></g><path d="M18.9 6.9 L24.7 12.8 L30.6 6.9" fill="none" stroke="#2d2f3a" stroke-width="1.3"/></svg>
<div class="td" style="left:105.6px;top:579.4px">CSV2x1</div>
<div class="td" style="left:248.5px;top:579.4px">2 chamarras</div>
<div class="td" style="left:573.8px;top:579.4px">chamarra (10)</div>
<div class="td" style="left:752.0px;top:579.4px;letter-spacing:0">2025-12-15 16:19:51</div>
<div class="td" style="left:932.2px;top:579.4px;letter-spacing:0">8</div>
<div class="td" style="left:1016.6px;top:579.4px;letter-spacing:0">0</div>
<div class="cb" style="left:1235.3999999999999px;top:581.7px"></div>
<div class="cbc" style="left:1505.3px;top:581.7px"></div>
<svg class="a" style="left:1505.3px;top:581.7px" width="19" height="19"><path d="M6 9.6 L8.6 12.1 L13.6 7.2" fill="none" stroke="#fff" stroke-width="2.4" stroke-linecap="square" stroke-linejoin="miter"/></svg>
<div class="act" style="top:607.5px"></div>
<svg class="a" style="left:40px;top:607px" width="36" height="18"><g fill="#111"><rect x="4" y="2.2" width="4" height="3.3" rx="1"/><rect x="4" y="6.9" width="4" height="3.3" rx="1.5"/><rect x="4" y="11.6" width="4" height="3.3" rx="1"/></g><path d="M18.9 6.9 L24.7 12.8 L30.6 6.9" fill="none" stroke="#2d2f3a" stroke-width="1.3"/></svg>
<div class="td" style="left:105.6px;top:608.4px">pruebaPromo</div>
<div class="td" style="left:248.5px;top:608.4px">Desc0001</div>
<div class="td" style="left:573.8px;top:608.4px">shopi-3 (1)</div>
<div class="td" style="left:752.0px;top:608.4px;letter-spacing:0">2025-12-15 15:10:59</div>
<div class="td" style="left:932.2px;top:608.4px;letter-spacing:0">105</div>
<div class="td" style="left:1016.6px;top:608.4px;letter-spacing:0">0</div>
<div class="cb" style="left:1235.3999999999999px;top:610.7px"></div>
<div class="cbc" style="left:1505.3px;top:610.7px"></div>
<svg class="a" style="left:1505.3px;top:610.7px" width="19" height="19"><path d="M6 9.6 L8.6 12.1 L13.6 7.2" fill="none" stroke="#fff" stroke-width="2.4" stroke-linecap="square" stroke-linejoin="miter"/></svg>
<div class="act" style="top:637.5px"></div>
<svg class="a" style="left:40px;top:637px" width="36" height="18"><g fill="#111"><rect x="4" y="2.2" width="4" height="3.3" rx="1"/><rect x="4" y="6.9" width="4" height="3.3" rx="1.5"/><rect x="4" y="11.6" width="4" height="3.3" rx="1"/></g><path d="M18.9 6.9 L24.7 12.8 L30.6 6.9" fill="none" stroke="#2d2f3a" stroke-width="1.3"/></svg>
<div class="td" style="left:105.6px;top:638.4px">PromoDeportiva</div>
<div class="td" style="left:248.5px;top:638.4px">deportivo completo chamarra, buso, tenis</div>
<div class="td" style="left:573.8px;top:638.4px">chamarra (1)<br>tenis (1)<br>buso (1)</div>
<div class="td" style="left:752.0px;top:638.4px;letter-spacing:0">2025-12-15 14:01:12</div>
<div class="td" style="left:932.2px;top:638.4px;letter-spacing:0">4</div>
<div class="td" style="left:1016.6px;top:638.4px;letter-spacing:0">10</div>
<div class="td" style="left:1317.6px;top:638.4px">FEX2ENV</div>
<div class="cb" style="left:1235.3999999999999px;top:640.7px"></div>
<div class="cb" style="left:1505.3px;top:640.7px"></div>
<div class="act" style="top:701.5px"></div>
<svg class="a" style="left:40px;top:701px" width="36" height="18"><g fill="#111"><rect x="4" y="2.2" width="4" height="3.3" rx="1"/><rect x="4" y="6.9" width="4" height="3.3" rx="1.5"/><rect x="4" y="11.6" width="4" height="3.3" rx="1"/></g><path d="M18.9 6.9 L24.7 12.8 L30.6 6.9" fill="none" stroke="#2d2f3a" stroke-width="1.3"/></svg>
<div class="td" style="left:105.6px;top:702.4px">synAPII</div>
<div class="td" style="left:248.5px;top:702.4px">test kit from csv</div>
<div class="td" style="left:573.8px;top:702.4px">prodTest-02 (2)<br>prodTest-03 (2)</div>
<div class="td" style="left:752.0px;top:702.4px;letter-spacing:0">2024-02-27 07:05:48</div>
<div class="td" style="left:932.2px;top:702.4px;letter-spacing:0">125</div>
<div class="td" style="left:1016.6px;top:702.4px;letter-spacing:0">0</div>
<div class="cb" style="left:1235.3999999999999px;top:704.7px"></div>
<div class="cbc" style="left:1505.3px;top:704.7px"></div>
<svg class="a" style="left:1505.3px;top:704.7px" width="19" height="19"><path d="M6 9.6 L8.6 12.1 L13.6 7.2" fill="none" stroke="#fff" stroke-width="2.4" stroke-linecap="square" stroke-linejoin="miter"/></svg>
<div class="act" style="top:747.5px"></div>
<svg class="a" style="left:40px;top:747px" width="36" height="18"><g fill="#111"><rect x="4" y="2.2" width="4" height="3.3" rx="1"/><rect x="4" y="6.9" width="4" height="3.3" rx="1.5"/><rect x="4" y="11.6" width="4" height="3.3" rx="1"/></g><path d="M18.9 6.9 L24.7 12.8 L30.6 6.9" fill="none" stroke="#2d2f3a" stroke-width="1.3"/></svg>
<div class="td" style="left:105.6px;top:748.4px">kitTest100</div>
<div class="td" style="left:248.5px;top:748.4px">kit</div>
<div class="td" style="left:573.8px;top:748.4px">virtual_sku3 (1)<br>videolaringoscope (1)</div>
<div class="td" style="left:752.0px;top:748.4px;letter-spacing:0">2024-02-26 15:01:24</div>
<div class="td" style="left:932.2px;top:748.4px;letter-spacing:0">0</div>
<div class="td" style="left:1016.6px;top:748.4px;letter-spacing:0">0</div>
<div class="cb" style="left:1235.3999999999999px;top:750.7px"></div>
<div class="cbc" style="left:1505.3px;top:750.7px"></div>
<svg class="a" style="left:1505.3px;top:750.7px" width="19" height="19"><path d="M6 9.6 L8.6 12.1 L13.6 7.2" fill="none" stroke="#fff" stroke-width="2.4" stroke-linecap="square" stroke-linejoin="miter"/></svg>
<div class="act" style="top:794.5px"></div>
<svg class="a" style="left:40px;top:794px" width="36" height="18"><g fill="#111"><rect x="4" y="2.2" width="4" height="3.3" rx="1"/><rect x="4" y="6.9" width="4" height="3.3" rx="1.5"/><rect x="4" y="11.6" width="4" height="3.3" rx="1"/></g><path d="M18.9 6.9 L24.7 12.8 L30.6 6.9" fill="none" stroke="#2d2f3a" stroke-width="1.3"/></svg>
<div class="td" style="left:248.5px;top:795.4px">test kit from csv</div>
<div class="td" style="left:573.8px;top:795.4px">prodTest-02 (1)</div>
<div class="td" style="left:752.0px;top:795.4px;letter-spacing:0">2024-02-05 15:32:08</div>
<div class="td" style="left:932.2px;top:795.4px;letter-spacing:0">251</div>
<div class="td" style="left:1016.6px;top:795.4px;letter-spacing:0">0</div>
<div class="cb" style="left:1235.3999999999999px;top:797.7px"></div>
<div class="cbc" style="left:1505.3px;top:797.7px"></div>
<svg class="a" style="left:1505.3px;top:797.7px" width="19" height="19"><path d="M6 9.6 L8.6 12.1 L13.6 7.2" fill="none" stroke="#fff" stroke-width="2.4" stroke-linecap="square" stroke-linejoin="miter"/></svg>
<div class="act" style="top:824.5px"></div>
<svg class="a" style="left:40px;top:824px" width="36" height="18"><g fill="#111"><rect x="4" y="2.2" width="4" height="3.3" rx="1"/><rect x="4" y="6.9" width="4" height="3.3" rx="1.5"/><rect x="4" y="11.6" width="4" height="3.3" rx="1"/></g><path d="M18.9 6.9 L24.7 12.8 L30.6 6.9" fill="none" stroke="#2d2f3a" stroke-width="1.3"/></svg>
<div class="td" style="left:105.6px;top:825.4px">kitUploaded</div>
<div class="td" style="left:248.5px;top:825.4px">test kit from csv</div>
<div class="td" style="left:573.8px;top:825.4px">prodTest-02 (1)<br>prodTest-03 (1)</div>
<div class="td" style="left:752.0px;top:825.4px;letter-spacing:0">2024-01-10 08:49:15</div>
<div class="td" style="left:932.2px;top:825.4px;letter-spacing:0">251</div>
<div class="td" style="left:1016.6px;top:825.4px;letter-spacing:0">0</div>
<div class="cb" style="left:1235.3999999999999px;top:827.7px"></div>
<div class="cbc" style="left:1505.3px;top:827.7px"></div>
<svg class="a" style="left:1505.3px;top:827.7px" width="19" height="19"><path d="M6 9.6 L8.6 12.1 L13.6 7.2" fill="none" stroke="#fff" stroke-width="2.4" stroke-linecap="square" stroke-linejoin="miter"/></svg>
<div class="act" style="top:870.5px"></div>
<svg class="a" style="left:40px;top:870px" width="36" height="18"><g fill="#111"><rect x="4" y="2.2" width="4" height="3.3" rx="1"/><rect x="4" y="6.9" width="4" height="3.3" rx="1.5"/><rect x="4" y="11.6" width="4" height="3.3" rx="1"/></g><path d="M18.9 6.9 L24.7 12.8 L30.6 6.9" fill="none" stroke="#2d2f3a" stroke-width="1.3"/></svg>
<div class="td" style="left:105.6px;top:871.4px">newKit</div>
<div class="td" style="left:248.5px;top:871.4px">two items</div>
<div class="td" style="left:573.8px;top:871.4px">sku01 (1)<br>prodTest-03 (1)</div>
<div class="td" style="left:752.0px;top:871.4px;letter-spacing:0">2024-01-10 08:42:34</div>
<div class="td" style="left:932.2px;top:871.4px;letter-spacing:0">162</div>
<div class="td" style="left:1016.6px;top:871.4px;letter-spacing:0">0</div>
<div class="cb" style="left:1235.3999999999999px;top:873.7px"></div>
<div class="cbc" style="left:1505.3px;top:873.7px"></div>
<svg class="a" style="left:1505.3px;top:873.7px" width="19" height="19"><path d="M6 9.6 L8.6 12.1 L13.6 7.2" fill="none" stroke="#fff" stroke-width="2.4" stroke-linecap="square" stroke-linejoin="miter"/></svg>
<div class="a" style="left:1563px;top:923px;width:315px;height:40px;border:1px solid #c3c7cf;border-radius:5px;background:#fff"></div>
<div class="a" style="left:1563px;top:923px;width:135px;height:40px;border:1px solid #5a6278;border-right:none;border-radius:5px 0 0 5px"></div>
<div class="a" style="left:1618px;top:923px;width:1px;height:10px;background:#5a6278"></div>
<div class="a" style="left:1698px;top:923px;width:36px;height:10px;background:#4a6a9a"></div>
<div class="a" style="left:1768px;top:923px;width:1px;height:10px;background:#c3c7cf"></div>
<div class="a" style="left:1824px;top:923px;width:1px;height:10px;background:#c3c7cf"></div>
<div class="a" style="left:1791px;top:870.8px;width:97px;height:44.3px;border-radius:22px 4px 22px 22px;background:#3b7ab6"></div>
<svg class="a" style="left:1800px;top:880px" width="26" height="26"><circle cx="12.4" cy="12.7" r="9.3" fill="none" stroke="#fff" stroke-width="1.4"/><path d="M9.6 10.3 A2.8 2.8 0 1 1 13.5 12.8 Q12.4 13.4 12.4 14.8" fill="none" stroke="#fff" stroke-width="1.5"/><circle cx="12.4" cy="17.2" r="0.95" fill="#fff"/></svg>
<div class="t" style="left:1830px;top:882px;font-size:17px;line-height:20px;font-weight:bold;color:#fff;letter-spacing:0.2px">Help</div>
</body></html>
